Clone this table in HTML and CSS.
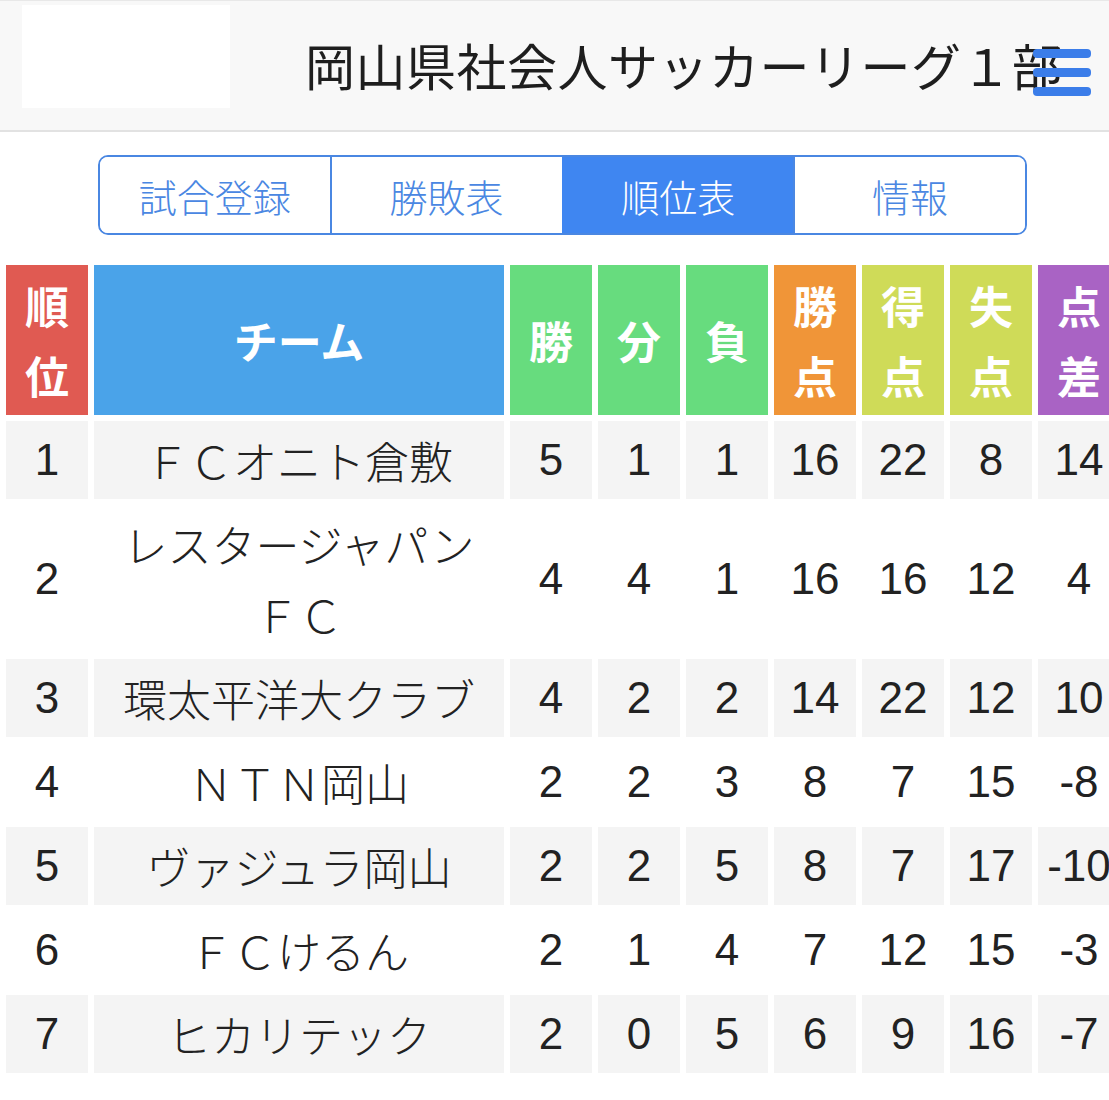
FILE: index.html
```html
<!DOCTYPE html>
<html lang="ja">
<head>
<meta charset="utf-8">
<title>順位表</title>
<link rel="stylesheet" href="styles.css">
</head>
<body>
<header class="site-header">
  <div class="logo-box"></div>
  <h1 class="title">岡山県社会人サッカーリーグ１部</h1>
  <div class="menu-btn" aria-label="menu">
    <span class="bar"></span><span class="bar"></span><span class="bar"></span>
  </div>
</header>

<nav class="tabs">
  <a class="tab">試合登録</a>
  <a class="tab">勝敗表</a>
  <a class="tab active">順位表</a>
  <a class="tab">情報</a>
</nav>

<table class="standings">
  <colgroup>
    <col class="c-rank"><col class="c-team"><col class="c-num"><col class="c-num"><col class="c-num"><col class="c-num"><col class="c-num"><col class="c-num"><col class="c-num">
  </colgroup>
  <thead>
    <tr>
      <th class="h-red">順<br>位</th>
      <th class="h-blue">チーム</th>
      <th class="h-green">勝</th>
      <th class="h-green">分</th>
      <th class="h-green">負</th>
      <th class="h-orange">勝<br>点</th>
      <th class="h-lime">得<br>点</th>
      <th class="h-lime">失<br>点</th>
      <th class="h-purple">点<br>差</th>
    </tr>
  </thead>
  <tbody>
    <tr><td>1</td><td>ＦＣオニト倉敷</td><td>5</td><td>1</td><td>1</td><td>16</td><td>22</td><td>8</td><td>14</td></tr>
    <tr><td>2</td><td>レスタージャパン<span class="nb">ＦＣ</span></td><td>4</td><td>4</td><td>1</td><td>16</td><td>16</td><td>12</td><td>4</td></tr>
    <tr><td>3</td><td>環太平洋大クラブ</td><td>4</td><td>2</td><td>2</td><td>14</td><td>22</td><td>12</td><td>10</td></tr>
    <tr><td>4</td><td>ＮＴＮ岡山</td><td>2</td><td>2</td><td>3</td><td>8</td><td>7</td><td>15</td><td>-8</td></tr>
    <tr><td>5</td><td>ヴァジュラ岡山</td><td>2</td><td>2</td><td>5</td><td>8</td><td>7</td><td>17</td><td>-10</td></tr>
    <tr><td>6</td><td>ＦＣけるん</td><td>2</td><td>1</td><td>4</td><td>7</td><td>12</td><td>15</td><td>-3</td></tr>
    <tr><td>7</td><td>ヒカリテック</td><td>2</td><td>0</td><td>5</td><td>6</td><td>9</td><td>16</td><td>-7</td></tr>
  </tbody>
</table>
</body>
</html>
```

FILE: styles.css
```css
html, body {
  margin: 0;
  padding: 0;
  background: #ffffff;
}
body {
  font-family: "Liberation Sans", "Noto Sans CJK JP", sans-serif;
  color: #222222;
  overflow-x: hidden;
}

.site-header {
  position: relative;
  height: 132px;
  box-sizing: border-box;
  background: #f8f8f8;
  border-top: 1px solid #e8e8e8;
  border-bottom: 2px solid #e2e2e2;
  display: flex;
  align-items: flex-start;
  padding: 4px 0 0 22px;
  white-space: nowrap;
}
.logo-box {
  width: 208px;
  height: 103px;
  background: #ffffff;
  flex: none;
}
.title {
  margin: 29px 0 0 75px;
  font-family: "Noto Sans CJK JP", sans-serif;
  font-weight: 400;
  font-size: 50px;
  line-height: 60px;
  color: #1e1e1e;
  letter-spacing: 0.5px;
}
.menu-btn {
  position: absolute;
  left: 1033px;
  top: 48px;
  width: 58px;
  display: flex;
  flex-direction: column;
  gap: 10px;
}
.menu-btn .bar {
  display: block;
  height: 9px;
  border-radius: 4px;
  background: #3b7de9;
}

.tabs {
  display: flex;
  width: 929px;
  height: 80px;
  box-sizing: border-box;
  margin: 23px 0 0 98px;
  border: 2px solid #4a87e2;
  border-radius: 10px;
  overflow: hidden;
}
.tab {
  flex: 1;
  display: flex;
  align-items: center;
  justify-content: center;
  font-family: "Noto Sans CJK JP", sans-serif;
  font-weight: 300;
  font-size: 38px;
  color: #4a87e2;
  background: #ffffff;
  border-left: 2px solid #4a87e2;
}
.tab:first-child {
  border-left: none;
}
.tab.active {
  background: #3f86f1;
  color: #ffffff;
  border-left-color: #3f86f1;
}

.standings {
  margin-top: 24px;
  border-collapse: separate;
  border-spacing: 6px;
  table-layout: fixed;
  width: 1126px;
}
.c-rank { width: 82px; }
.c-team { width: 410px; }
.c-num { width: 82px; }

.standings th,
.standings td {
  padding: 4px 0;
  text-align: center;
  vertical-align: middle;
  font-size: 44px;
  line-height: 70px;
}
.standings th {
  color: #ffffff;
  font-weight: 700;
  font-family: "Noto Sans CJK JP", sans-serif;
  height: 142px;
}
.standings td {
  height: 70px;
  font-weight: 400;
  color: #222222;
  white-space: nowrap;
}
.standings td:nth-child(2) {
  white-space: normal;
  font-family: "Noto Sans CJK JP", sans-serif;
  font-weight: 300;
}
.nb {
  white-space: nowrap;
}
.standings tbody tr:nth-child(odd) td {
  background: #f4f4f4;
}
.standings tbody tr:nth-child(even) td {
  background: #ffffff;
}

.h-red { background: #e05a52; }
.h-blue { background: #4aa3e9; }
.h-green { background: #67dc7e; }
.h-orange { background: #f09538; }
.h-lime { background: #cfdb58; }
.h-purple { background: #a963c4; }
```
